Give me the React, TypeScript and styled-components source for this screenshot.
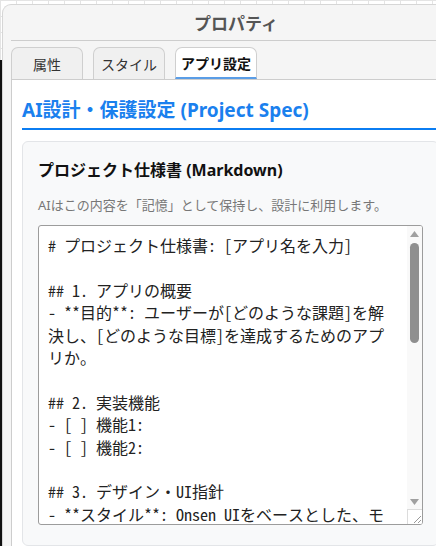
import styled, { createGlobalStyle } from "styled-components";

const GlobalStyle = createGlobalStyle`
  html, body {
    margin: 0;
    padding: 0;
    height: 100%;
    overflow: hidden;
  }
  body {
    font-family: "Noto Sans", "Noto Sans CJK JP", sans-serif;
    background-color: #ffffff;
    background-image:
      linear-gradient(to right, #e4e4e4 1px, transparent 1px),
      linear-gradient(to bottom, #e4e4e4 1px, transparent 1px);
    background-size: 16px 16px;
  }
  #root {
    height: 100%;
  }
`;

const Screen = styled.div`
  display: flex;
  height: 100%;
`;

const Edge = styled.div`
  width: 2px;
  flex-shrink: 0;
  margin-top: 60px;
  background: #111;
`;

const Panel = styled.div`
  width: 450px;
  flex-shrink: 0;
  margin-top: 4px;
  display: flex;
  flex-direction: column;
  background: #f5f5f5;
  border-left: 1px solid #d6d6d6;
  border-top: 1px solid #d6d6d6;
  border-top-left-radius: 9px;
  padding-left: 8px;
`;

const Header = styled.div`
  height: 35px;
  display: flex;
  align-items: center;
  justify-content: center;
  border-bottom: 1px solid #cdcdcd;
  font-family: "Noto Sans CJK JP", sans-serif;
  font-size: 17px;
  font-weight: 700;
  color: #555;
`;

const Tabs = styled.div`
  display: flex;
  gap: 10px;
  margin-top: 6px;
`;

const Tab = styled.div<{ $active?: boolean }>`
  min-width: 72px;
  height: 32px;
  box-sizing: border-box;
  padding: 0 5px;
  display: flex;
  align-items: center;
  justify-content: center;
  border: 1px solid #cfcfcf;
  border-bottom: ${(p) => (p.$active ? "2px solid #5a9de6" : "none")};
  border-radius: 7px 7px 0 0;
  background: ${(p) => (p.$active ? "#fff" : "#f0f0f0")};
  font-family: "Noto Sans CJK JP", sans-serif;
  font-size: 14px;
  font-weight: ${(p) => (p.$active ? 700 : 400)};
  color: ${(p) => (p.$active ? "#111" : "#333")};
`;

const Content = styled.div`
  flex: 1;
  background: #fff;
  border-left: 1px solid #cdcdcd;
  border-top: 1px solid #cdcdcd;
  padding-left: 10px;
`;

const SectionTitle = styled.h2`
  margin: 17px 0 0;
  padding-bottom: 5px;
  border-bottom: 2px solid #0b7df2;
  font-size: 19px;
  line-height: 26px;
  font-weight: 700;
  color: #1a80ee;
`;

const Card = styled.div`
  margin: 11px 22px 0 0;
  padding: 17px 15px 20px;
  background: #f8f9fa;
  border: 1px solid #e3e5e8;
  border-radius: 6px;
`;

const CardTitle = styled.div`
  font-size: 16px;
  line-height: 22px;
  font-weight: 700;
  color: #111;
`;

const Hint = styled.div`
  margin-top: 15px;
  font-size: 13px;
  line-height: 18px;
  color: #777;
`;

const EditorBox = styled.div`
  position: relative;
  margin-top: 11px;
  height: 300px;
  box-sizing: border-box;
  border: 1px solid #9c9c9c;
  border-radius: 3px;
  background: #fff;
  overflow: hidden;
`;

const Editor = styled.textarea`
  display: block;
  width: 100%;
  height: 100%;
  box-sizing: border-box;
  margin: 0;
  padding: 8px 24px 8px 9px;
  border: none;
  background: transparent;
  font-family: "Noto Sans Mono CJK JP", "Noto Sans CJK JP", "Liberation Mono", monospace;
  font-size: 16px;
  line-height: 22.4px;
  color: #222;
  outline: none;
  resize: none;
  overflow: hidden;
`;

const ScrollBar = styled.div`
  position: absolute;
  top: 0;
  right: 0;
  bottom: 0;
  width: 15px;
  display: flex;
  flex-direction: column;
  background: #f9f9f9;
`;

const ScrollButton = styled.div`
  height: 15px;
  display: flex;
  align-items: center;
  justify-content: center;
`;

const Track = styled.div`
  flex: 1;
  padding: 2px 3px;
`;

const Thumb = styled.div`
  height: 100px;
  border-radius: 5px;
  background: #8f8f8f;
`;

const Grip = styled.div`
  height: 15px;
  box-sizing: border-box;
  border-top: 1px solid #dcdcdc;
  border-left: 1px solid #dcdcdc;
  background: #fff;
  display: flex;
  align-items: flex-end;
  justify-content: flex-end;
`;

const Arrow = ({ down }: { down?: boolean }) => (
  <svg width="9" height="6" viewBox="0 0 9 6">
    <polygon points={down ? "0,0 9,0 4.5,6" : "4.5,0 9,6 0,6"} fill="#a0a0a0" />
  </svg>
);

const spec = `# プロジェクト仕様書: [アプリ名を入力]

## 1. アプリの概要
- **目的**: ユーザーが[どのような課題]を解決し、[どのような目標]を達成するためのアプリか。

## 2. 実装機能
- [ ] 機能1:
- [ ] 機能2:

## 3. デザイン・UI指針
- **スタイル**: Onsen UIをベースとした、モダンでシンプルなデザイン。
- **カラー**: メインカラーは青系で統一する。
- **操作性**: スマートフォンで片手操作しやすい配置にする。

## 4. データ構造
- [データ名]: [保存する内容]
- [データ名]: [保存する内容]

## 5. 画面構成
- ホーム画面:
- 設定画面:

## 6. 制約・注意事項
- 既存のコードを壊さないこと。
- 変更前に必ず確認すること。

## 7. 今後の予定
- [ ] 機能の追加:
- [ ] テスト:
`;

export default function App() {
  return (
    <>
      <GlobalStyle />
      <Screen>
        <Edge />
        <Panel>
          <Header>プロパティ</Header>
          <Tabs>
            <Tab>属性</Tab>
            <Tab>スタイル</Tab>
            <Tab $active>アプリ設定</Tab>
          </Tabs>
          <Content>
            <SectionTitle>AI設計・保護設定 (Project Spec)</SectionTitle>
            <Card>
              <CardTitle>プロジェクト仕様書 (Markdown)</CardTitle>
              <Hint>AIはこの内容を「記憶」として保持し、設計に利用します。</Hint>
              <EditorBox>
                <Editor defaultValue={spec} spellCheck={false} />
                <ScrollBar>
                  <ScrollButton>
                    <Arrow />
                  </ScrollButton>
                  <Track>
                    <Thumb />
                  </Track>
                  <ScrollButton>
                    <Arrow down />
                  </ScrollButton>
                  <Grip>
                    <svg width="10" height="10" viewBox="0 0 10 10">
                      <line x1="9" y1="2" x2="2" y2="9" stroke="#999" strokeWidth="1" />
                      <line x1="9" y1="6" x2="6" y2="9" stroke="#999" strokeWidth="1" />
                    </svg>
                  </Grip>
                </ScrollBar>
              </EditorBox>
            </Card>
          </Content>
        </Panel>
      </Screen>
    </>
  );
}
